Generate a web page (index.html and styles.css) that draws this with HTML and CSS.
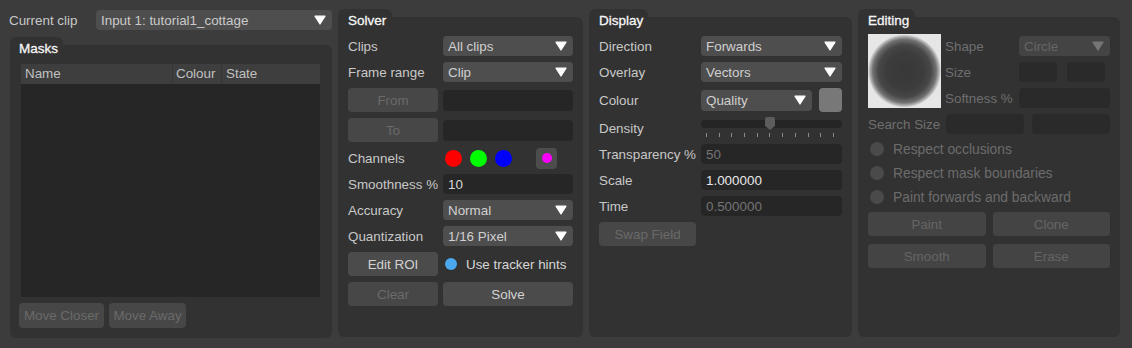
FILE: index.html
```html
<!DOCTYPE html>
<html>
<head>
<meta charset="utf-8">
<link rel="stylesheet" href="styles.css">
</head>
<body>
<div class="app">
  <div class="col1">
    <div class="clip-row">
      <span class="clip-lbl">Current clip</span>
      <div class="combo clip-combo"><span>Input 1: tutorial1_cottage</span><svg class="arrow" viewBox="0 0 12 10"><path d="M1 1.2 L11 1.2 L6 9 Z" fill="currentColor" stroke="currentColor" stroke-width="1.2" stroke-linejoin="round"/></svg></div>
    </div>
    <div class="group grow">
      <div class="tab tab-masks"></div>
      <div class="body masks-body">
        <div class="title">Masks</div>
        <div class="table">
          <div class="thead">
            <span class="th th-name">Name</span>
            <span class="th th-colour">Colour</span>
            <span class="th th-state">State</span>
          </div>
          <div class="tbody"></div>
        </div>
        <div class="btn-row">
          <div class="btn disabled w85">Move Closer</div>
          <div class="btn disabled w77">Move Away</div>
        </div>
      </div>
    </div>
  </div>

  <div class="group solver">
    <div class="tab tab-solver"></div>
    <div class="body">
      <div class="title">Solver</div>
      <div class="row"><span class="lbl l95">Clips</span><div class="combo ctrl"><span>All clips</span><svg class="arrow" viewBox="0 0 12 10"><path d="M1 1.2 L11 1.2 L6 9 Z" fill="currentColor" stroke="currentColor" stroke-width="1.2" stroke-linejoin="round"/></svg></div></div>
      <div class="row"><span class="lbl l95">Frame range</span><div class="combo ctrl"><span>Clip</span><svg class="arrow" viewBox="0 0 12 10"><path d="M1 1.2 L11 1.2 L6 9 Z" fill="currentColor" stroke="currentColor" stroke-width="1.2" stroke-linejoin="round"/></svg></div></div>
      <div class="row h24 gap5"><div class="btn disabled w90">From</div><div class="input ctrl h21"></div></div>
      <div class="row h24 gap5"><div class="btn disabled w90">To</div><div class="input ctrl h21"></div></div>
      <div class="row"><span class="lbl l95">Channels</span>
        <div class="channels">
          <span class="dot red"></span><span class="dot green"></span><span class="dot blue"></span>
          <span class="mag-btn"><span class="mag-dot"></span></span>
        </div>
      </div>
      <div class="row"><span class="lbl l95">Smoothness %</span><div class="input ctrl"><span>10</span></div></div>
      <div class="row"><span class="lbl l95">Accuracy</span><div class="combo ctrl"><span>Normal</span><svg class="arrow" viewBox="0 0 12 10"><path d="M1 1.2 L11 1.2 L6 9 Z" fill="currentColor" stroke="currentColor" stroke-width="1.2" stroke-linejoin="round"/></svg></div></div>
      <div class="row"><span class="lbl l95">Quantization</span><div class="combo ctrl"><span>1/16 Pixel</span><svg class="arrow" viewBox="0 0 12 10"><path d="M1 1.2 L11 1.2 L6 9 Z" fill="currentColor" stroke="currentColor" stroke-width="1.2" stroke-linejoin="round"/></svg></div></div>
      <div class="row h24 gap5"><div class="btn w90">Edit ROI</div><div class="check ctrl"><span class="radio-on"></span><span>Use tracker hints</span></div></div>
      <div class="row h24 gap5"><div class="btn disabled w90">Clear</div><div class="btn ctrl">Solve</div></div>
    </div>
  </div>

  <div class="group display">
    <div class="tab tab-display"></div>
    <div class="body">
      <div class="title">Display</div>
      <div class="row"><span class="lbl l102">Direction</span><div class="combo ctrl"><span>Forwards</span><svg class="arrow" viewBox="0 0 12 10"><path d="M1 1.2 L11 1.2 L6 9 Z" fill="currentColor" stroke="currentColor" stroke-width="1.2" stroke-linejoin="round"/></svg></div></div>
      <div class="row"><span class="lbl l102">Overlay</span><div class="combo ctrl"><span>Vectors</span><svg class="arrow" viewBox="0 0 12 10"><path d="M1 1.2 L11 1.2 L6 9 Z" fill="currentColor" stroke="currentColor" stroke-width="1.2" stroke-linejoin="round"/></svg></div></div>
      <div class="row h24"><span class="lbl l102">Colour</span><div class="combo colour-combo h21"><span>Quality</span><svg class="arrow" viewBox="0 0 12 10"><path d="M1 1.2 L11 1.2 L6 9 Z" fill="currentColor" stroke="currentColor" stroke-width="1.2" stroke-linejoin="round"/></svg></div><div class="swatch"></div></div>
      <div class="row"><span class="lbl l102">Density</span>
        <div class="slider ctrl">
          <div class="track"></div>
          <div class="ticks"><i></i><i></i><i></i><i></i><i></i><i></i><i></i><i></i><i></i><i></i><i></i></div>
          <div class="handle"></div>
        </div>
      </div>
      <div class="row"><span class="lbl l102">Transparency %</span><div class="input ctrl dim"><span>50</span></div></div>
      <div class="row"><span class="lbl l102">Scale</span><div class="input ctrl bright"><span>1.000000</span></div></div>
      <div class="row"><span class="lbl l102">Time</span><div class="input ctrl dim"><span>0.500000</span></div></div>
      <div class="row h24"><div class="btn disabled w97">Swap Field</div></div>
    </div>
  </div>

  <div class="group editing">
    <div class="tab tab-editing"></div>
    <div class="body off">
      <div class="title">Editing</div>
      <div class="edit-top">
        <div class="preview"></div>
        <div class="edit-grid">
          <div class="row"><span class="lbl l74">Shape</span><div class="combo ctrl"><span>Circle</span><svg class="arrow" viewBox="0 0 12 10"><path d="M1 1.2 L11 1.2 L6 9 Z" fill="currentColor" stroke="currentColor" stroke-width="1.2" stroke-linejoin="round"/></svg></div></div>
          <div class="row"><span class="lbl l74">Size</span><div class="input w38"></div><div class="input w38 ml10"></div></div>
          <div class="row"><span class="lbl l74">Softness %</span><div class="input ctrl"></div></div>
        </div>
      </div>
      <div class="row"><span class="lbl l78">Search Size</span><div class="input w78"></div><div class="input ctrl ml8"></div></div>
      <div class="row h18"><span class="radio-off"></span><span>Respect occlusions</span></div>
      <div class="row h18"><span class="radio-off"></span><span>Respect mask boundaries</span></div>
      <div class="row h18"><span class="radio-off"></span><span>Paint forwards and backward</span></div>
      <div class="row h24 gap7"><div class="btn ctrl">Paint</div><div class="btn ctrl">Clone</div></div>
      <div class="row h24 gap7 mt2"><div class="btn ctrl">Smooth</div><div class="btn ctrl">Erase</div></div>
    </div>
  </div>
</div>
</body>
</html>
```
FILE: styles.css
```css
html, body {
  margin: 0;
  padding: 0;
}
body {
  background: #3c3c3c;
  font-family: "Liberation Sans", Arial, sans-serif;
  font-size: 13.4px;
  color: #c8c8c8;
}
.app {
  display: flex;
  gap: 6px;
  padding: 9px 12px 11px 10px;
  height: 348px;
  box-sizing: border-box;
}
.col1 {
  width: 322px;
  display: flex;
  flex-direction: column;
  gap: 7px;
  margin-bottom: -1px;
}
.clip-row {
  display: flex;
  align-items: center;
  height: 20px;
  margin-top: 1px;
}
.clip-lbl {
  width: 86px;
  margin-left: -1px;
  padding-right: 1px;
  white-space: nowrap;
}
.group {
  display: flex;
  flex-direction: column;
}
.grow { flex: 1; }
.solver { width: 245px; }
.display { width: 263px; }
.editing { width: 262px; }
.tab {
  height: 8px;
  background: #323232;
  border-radius: 6px 6px 0 0;
  flex: none;
}
.tab-masks { width: 53px; }
.tab-solver { width: 54px; }
.tab-display { width: 59px; }
.tab-editing { width: 57px; }
.body {
  flex: 1;
  background: #323232;
  border-radius: 0 6px 6px 6px;
  padding: 0 10px 10px;
  display: flex;
  flex-direction: column;
  gap: 6px;
}
.title {
  margin-top: -4px;
  margin-bottom: 1px;
  height: 16px;
  line-height: 16px;
  color: #f6f6f6;
  font-size: 13.5px;
  -webkit-text-stroke: 0.3px #f6f6f6;
}
.masks-body {
  padding: 0 12px 10px 9px;
}
.table {
  flex: 1;
  margin-left: 2px;
  display: flex;
  flex-direction: column;
  background: #262626;
}
.thead {
  display: flex;
  height: 20px;
  background: #3e3e3e;
  align-items: center;
  color: #c0c0c0;
}
.th {
  padding-left: 4px;
  box-sizing: border-box;
  height: 20px;
  line-height: 20px;
}
.th-name { width: 151px; }
.th-colour { width: 49px; padding-left: 3px; border-left: 1px solid #353535; }
.th-state { flex: 1; border-left: 1px solid #353535; }
.tbody { flex: 1; }
.btn-row {
  display: flex;
  gap: 5px;
  height: 25px;
}
.row {
  display: flex;
  align-items: center;
  height: 20px;
  flex: none;
}
.h24 { height: 24px; }
.gap5 { gap: 5px; }
.h18 { height: 18px; }
.gap7 { gap: 7px; }
.mt2 { margin-top: 2px; }
.lbl { flex: none; white-space: nowrap; }
.l95 { width: 95px; }
.l102 { width: 102px; }
.l74 { width: 74px; }
.l78 { width: 78px; }
.ctrl { flex: 1; min-width: 0; }
.combo {
  height: 20px;
  background: #4e4e4e;
  border-radius: 4px;
  display: flex;
  align-items: center;
  justify-content: space-between;
  padding: 0 6px 0 5px;
  box-sizing: border-box;
  color: #d0d0d0;
}
.clip-combo { flex: 1; color: #cacaca; }
.arrow {
  width: 12px;
  height: 10px;
  color: #ffffff;
  flex: none;
}
.input {
  height: 20px;
  background: #262626;
  border-radius: 4px;
  display: flex;
  align-items: center;
  padding: 0 5px;
  box-sizing: border-box;
  color: #d6d6d6;
}
.h21 { height: 21px; }
.input.dim { color: #747474; }
.input.bright { color: #e8e8e8; }
.btn {
  height: 24px;
  background: #4b4b4b;
  border-radius: 4px;
  display: flex;
  align-items: center;
  justify-content: center;
  box-sizing: border-box;
  color: #d2d2d2;
  flex: none;
}
.btn.ctrl { flex: 1; }
.btn-row .btn { height: 25px; }
.btn.disabled {
  background: #474747;
  color: #6a6a6a;
}
.w85 { width: 85px; }
.w77 { width: 77px; }
.w90 { width: 90px; }
.w97 { width: 97px; }
.w38 { width: 38px; flex: none; }
.w78 { width: 78px; flex: none; }
.ml10 { margin-left: 10px; }
.ml8 { margin-left: 8px; }
.channels {
  display: flex;
  align-items: center;
  padding-left: 2px;
}
.dot {
  width: 17px;
  height: 17px;
  border-radius: 50%;
  margin-right: 8px;
}
.red { background: #ff0000; }
.green { background: #00ff00; }
.blue { background: #0000ff; }
.mag-btn {
  width: 21px;
  height: 21px;
  background: #4d4d4d;
  border-radius: 4px;
  margin-left: 16px;
  display: flex;
  align-items: center;
  justify-content: center;
}
.mag-dot {
  width: 10px;
  height: 10px;
  border-radius: 50%;
  background: #ff00ff;
}
.check {
  display: flex;
  align-items: center;
  gap: 9px;
  padding-left: 2px;
  color: #d6d6d6;
  white-space: nowrap;
}
.radio-on {
  width: 12px;
  height: 12px;
  border-radius: 50%;
  background: #4ba8ec;
  flex: none;
}
.colour-combo { width: 111px; flex: none; }
.swatch {
  width: 23px;
  height: 24px;
  margin-left: 7px;
  background: #787878;
  border-radius: 4px;
}
.slider {
  position: relative;
  height: 20px;
  display: flex;
  flex-direction: column;
}
.track {
  margin-top: 2px;
  height: 8px;
  background: #252525;
  border-radius: 4px;
}
.ticks {
  margin-top: 5px;
  height: 4px;
  display: flex;
  justify-content: space-between;
  padding: 0 8px 0 5px;
}
.ticks i {
  width: 1px;
  height: 4px;
  background: #8a8a8a;
}
.handle {
  position: absolute;
  left: 64px;
  top: -1px;
  width: 10px;
  height: 13px;
  background: #5c5c5c;
  clip-path: polygon(0 0, 100% 0, 100% 70%, 50% 100%, 0 70%);
  border-radius: 2px 2px 0 0;
}
.off { color: #6e6e6e; }
.off .combo { background: #444444; color: #666666; }
.off .combo .arrow { color: #777777; }
.off .input { background: #2a2a2a; }
.off .btn { background: #444444; color: #656565; }
.edit-top {
  display: flex;
  gap: 4px;
  height: 72px;
}
.preview {
  width: 73px;
  height: 74px;
  margin-top: -2px;
  flex: none;
  background: radial-gradient(circle closest-side, #383838 0%, #3c3c3c 50%, #474747 72%, #727272 87%, #c4c4c4 97%, #e6e6e6 100%);
  background-color: #e6e6e6;
}
.edit-grid {
  flex: 1;
  display: flex;
  flex-direction: column;
  gap: 6px;
}
.radio-off {
  width: 14px;
  height: 14px;
  border-radius: 50%;
  background: #4a4a4a;
  margin-right: 9px;
  flex: none;
}
.off .row.h18 { padding-left: 2px; color: #6c6c6c; font-size: 13.8px; }
```
